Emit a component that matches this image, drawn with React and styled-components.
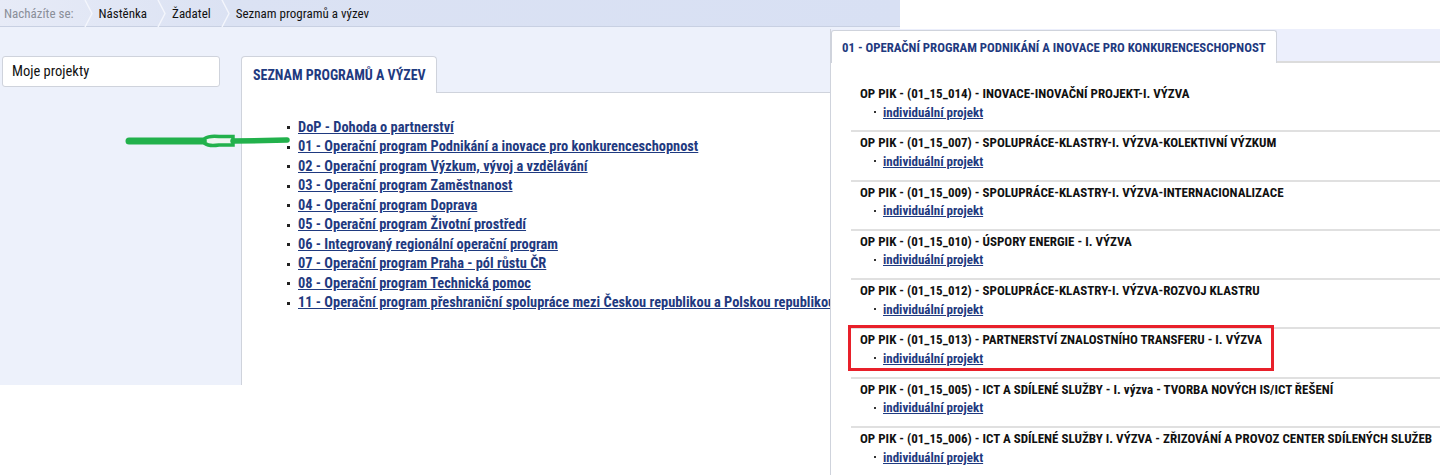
import * as React from "react";
import styled, { createGlobalStyle } from "styled-components";

const FONT = `"Liberation Sans Narrow", "Roboto Condensed", Roboto, sans-serif`;
const LINK = "#1f3a80";

const GlobalStyle = createGlobalStyle`
  html, body {
    margin: 0;
    padding: 0;
    background: #fff;
    font-family: ${FONT};
  }
`;

const programs = [
  "DoP - Dohoda o partnerství",
  "01 - Operační program Podnikání a inovace pro konkurenceschopnost",
  "02 - Operační program Výzkum, vývoj a vzdělávání",
  "03 - Operační program Zaměstnanost",
  "04 - Operační program Doprava",
  "05 - Operační program Životní prostředí",
  "06 - Integrovaný regionální operační program",
  "07 - Operační program Praha - pól růstu ČR",
  "08 - Operační program Technická pomoc",
  "11 - Operační program přeshraniční spolupráce mezi Českou republikou a Polskou republikou",
];

const calls = [
  "OP PIK - (01_15_014) - INOVACE-INOVAČNÍ PROJEKT-I. VÝZVA",
  "OP PIK - (01_15_007) - SPOLUPRÁCE-KLASTRY-I. VÝZVA-KOLEKTIVNÍ VÝZKUM",
  "OP PIK - (01_15_009) - SPOLUPRÁCE-KLASTRY-I. VÝZVA-INTERNACIONALIZACE",
  "OP PIK - (01_15_010) - ÚSPORY ENERGIE - I. VÝZVA",
  "OP PIK - (01_15_012) - SPOLUPRÁCE-KLASTRY-I. VÝZVA-ROZVOJ KLASTRU",
  "OP PIK - (01_15_013) - PARTNERSTVÍ ZNALOSTNÍHO TRANSFERU - I. VÝZVA",
  "OP PIK - (01_15_005) - ICT A SDÍLENÉ SLUŽBY - I. výzva - TVORBA NOVÝCH IS/ICT ŘEŠENÍ",
  "OP PIK - (01_15_006) - ICT A SDÍLENÉ SLUŽBY I. VÝZVA - ZŘIZOVÁNÍ A PROVOZ CENTER SDÍLENÝCH SLUŽEB",
];

const Chevron = () => (
  <ChevronSvg width="9" height="27" viewBox="0 0 9 27">
    <path d="M1 0 L8 13.5 L1 27" fill="none" stroke="#f4f6fc" strokeWidth="1.4" />
  </ChevronSvg>
);

const Arrow = () => (
  <ArrowSvg width="170" height="16" viewBox="0 0 170 16">
    <path d="M4 8 L80 8" stroke="#22b14c" strokeWidth="7" strokeLinecap="round" />
    <path d="M80 5.5 Q84 2.5 94 3.5 L108 3.5 L108 12 L94 12 Q84 13.5 80 10.5 Z" fill="#eef5f0" stroke="#22b14c" strokeWidth="3.5" />
    <path d="M108 8 L140 7.5 L162 7" stroke="#22b14c" strokeWidth="5.5" strokeLinecap="round" fill="none" />
  </ArrowSvg>
);

const App = () => {
  return (
    <Root>
      <GlobalStyle />
      <Page>
        <Breadcrumb>
          <Crumb muted>Nacházíte se:</Crumb>
          <Chevron />
          <Crumb>Nástěnka</Crumb>
          <Chevron />
          <Crumb>Žadatel</Crumb>
          <Chevron />
          <Crumb>Seznam programů a výzev</Crumb>
        </Breadcrumb>
        <Main>
          <Sidebar>
            <SideBox>Moje projekty</SideBox>
          </Sidebar>
          <Content>
            <Tab>SEZNAM PROGRAMŮ A VÝZEV</Tab>
            <Panel>
              <ProgramList>
                {programs.map((p) => (
                  <ProgramItem key={p}>
                    <ProgramLink href="#">{p}</ProgramLink>
                  </ProgramItem>
                ))}
              </ProgramList>
            </Panel>
          </Content>
          <Arrow />
        </Main>
      </Page>

      <Overlay>
        <OverlayTabs>
          <OverlayTab>01 - OPERAČNÍ PROGRAM PODNIKÁNÍ A INOVACE PRO KONKURENCESCHOPNOST</OverlayTab>
        </OverlayTabs>
        <CallList>
          {calls.map((c, i) => (
            <CallItem key={c} highlighted={i === 5}>
              <CallTitle>{c}</CallTitle>
              <SubList>
                <SubItem>
                  <ProgramLink href="#" small>
                    individuální projekt
                  </ProgramLink>
                </SubItem>
              </SubList>
            </CallItem>
          ))}
        </CallList>
      </Overlay>
    </Root>
  );
};

const Root = styled.div`
  position: relative;
  width: 1440px;
  height: 475px;
  overflow: hidden;
  background: #fff;
`;

const Page = styled.div`
  width: 900px;
`;

const Breadcrumb = styled.div`
  height: 27px;
  display: flex;
  align-items: center;
  background: linear-gradient(to right, #e7ebf7 0px, #dbe2f3 230px, #d8e0f3 100%);
  border-bottom: 1px solid #c8d0e2;
  box-sizing: border-box;
  padding-left: 4px;
`;

const Crumb = styled.span`
  font-size: 13px;
  color: ${(p) => (p.muted ? "#8a8f99" : "#111")};
  padding-right: 10px;
  white-space: nowrap;
`;

const ChevronSvg = styled.svg`
  display: block;
  margin-right: 6px;
  flex-shrink: 0;
`;

const Main = styled.div`
  position: relative;
  display: flex;
  height: 358px;
  background: #edf1fb;
`;

const Sidebar = styled.div`
  width: 241px;
  flex-shrink: 0;
  padding: 29px 0 0 2px;
  box-sizing: border-box;
`;

const SideBox = styled.div`
  width: 218px;
  height: 31px;
  box-sizing: border-box;
  background: #fff;
  border: 1px solid #cfd3dc;
  border-radius: 3px;
  padding: 6px 9px;
  font-size: 14.5px;
  color: #111;
`;

const Content = styled.div`
  flex: 1;
  display: flex;
  flex-direction: column;
  padding-top: 29px;
`;

const Tab = styled.div`
  align-self: flex-start;
  width: 196px;
  height: 37px;
  box-sizing: border-box;
  background: #fff;
  border: 1px solid #cfd3dc;
  border-bottom: none;
  border-radius: 4px 4px 0 0;
  padding: 10px 0 0 11px;
  font-size: 14px;
  font-weight: bold;
  color: ${LINK};
  margin-bottom: -1px;
  position: relative;
  z-index: 1;
`;

const Panel = styled.div`
  flex: 1;
  background: #fff;
  border-top: 1px solid #cfd3dc;
  border-left: 1px solid #cfd3dc;
  padding: 25px 0 0 0;
`;

const ProgramList = styled.ul`
  margin: 0;
  padding-left: 45px;
  list-style: none;
`;

const ProgramItem = styled.li`
  display: flex;
  align-items: center;
  height: 19.5px;

  &::before {
    content: "";
    width: 3px;
    height: 3px;
    background: #222;
    margin-right: 8px;
    flex-shrink: 0;
  }
`;

const ProgramLink = styled.a`
  color: ${LINK};
  font-weight: bold;
  font-size: ${(p) => (p.small ? "13px" : "14.4px")};
  line-height: 1;
  text-decoration: underline;
  white-space: nowrap;
`;

const ArrowSvg = styled.svg`
  position: absolute;
  left: 125px;
  top: 106px;
`;

const Overlay = styled.div`
  position: absolute;
  left: 830px;
  top: 29px;
  width: 610px;
  height: 446px;
  background: #fff;
  border-left: 1px solid #cfd3dc;
  box-sizing: border-box;
`;

const OverlayTabs = styled.div`
  height: 34px;
  box-sizing: border-box;
  display: flex;
  align-items: flex-end;
  background: #eceffc;
  border-bottom: 2px solid #dcdcdc;
  padding-top: 1px;
`;

const OverlayTab = styled.div`
  height: 33px;
  box-sizing: border-box;
  background: #fff;
  border: 1px solid #cfd3dc;
  border-bottom: none;
  border-radius: 3px 3px 0 0;
  padding: 9px 10px 0 10px;
  margin-bottom: -2px;
  font-size: 12.8px;
  font-weight: bold;
  color: ${LINK};
  white-space: nowrap;
`;

const CallList = styled.div`
  padding: 18px 0 0 20px;
`;

const CallItem = styled.div`
  position: relative;
  padding: 2px 0 9.3px 9px;
  border-top: 2px solid #e0e0e0;

  &:first-child {
    border-top-color: transparent;
  }

  ${(p) =>
    p.highlighted &&
    `
    &::after {
      content: "";
      position: absolute;
      left: -3px;
      top: -4px;
      width: 426px;
      height: 46px;
      box-sizing: border-box;
      border: 3px solid #e8202a;
    }
  `}
`;

const CallTitle = styled.div`
  font-size: 13px;
  font-weight: bold;
  color: #111;
  height: 18px;
  line-height: 18px;
  white-space: nowrap;
`;

const SubList = styled.ul`
  margin: 0;
  padding-left: 14px;
  list-style: none;
`;

const SubItem = styled.li`
  display: flex;
  align-items: center;
  height: 18px;

  &::before {
    content: "";
    width: 2px;
    height: 2px;
    background: #333;
    margin-right: 7px;
    flex-shrink: 0;
  }
`;

export default App;
